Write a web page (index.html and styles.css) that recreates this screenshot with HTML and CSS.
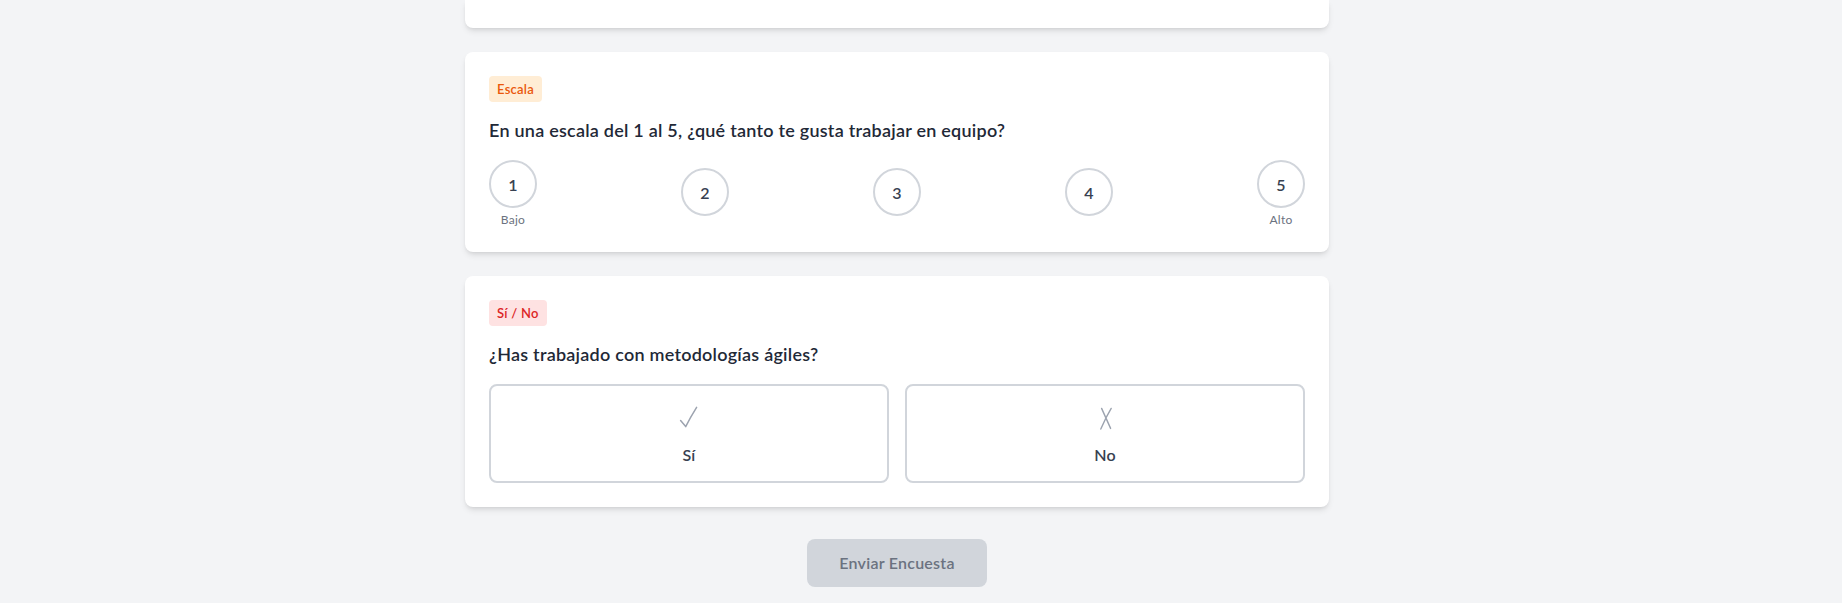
FILE: index.html
```html
<!DOCTYPE html>
<html lang="es">
<head>
<meta charset="utf-8">
<title>Encuesta</title>
<link rel="stylesheet" href="styles.css">
</head>
<body>
<div class="page">
  <div class="survey">
    <div class="card card-stub"></div>

    <div class="card">
      <span class="badge badge-orange">Escala</span>
      <h3 class="question">En una escala del 1 al 5, ¿qué tanto te gusta trabajar en equipo?</h3>
      <div class="scale">
        <div class="scale-item">
          <button class="scale-btn">1</button>
          <span class="scale-label">Bajo</span>
        </div>
        <div class="scale-item">
          <button class="scale-btn">2</button>
        </div>
        <div class="scale-item">
          <button class="scale-btn">3</button>
        </div>
        <div class="scale-item">
          <button class="scale-btn">4</button>
        </div>
        <div class="scale-item">
          <button class="scale-btn">5</button>
          <span class="scale-label">Alto</span>
        </div>
      </div>
    </div>

    <div class="card">
      <span class="badge badge-red">Sí / No</span>
      <h3 class="question">¿Has trabajado con metodologías ágiles?</h3>
      <div class="yesno">
        <button class="yn-btn">
          <span class="yn-icon">
            <svg width="24" height="24" viewBox="0 0 24 24"><path d="M3.6 14.6 L8.7 20.6 Q13 12 19.6 1.4" fill="none" stroke="#9ca3af" stroke-width="1.5" stroke-linecap="round" stroke-linejoin="round"/></svg>
          </span>
          <span class="yn-label">Sí</span>
        </button>
        <button class="yn-btn">
          <span class="yn-icon">
            <svg width="24" height="24" viewBox="0 0 24 24"><path d="M8.6 2.4 L17.6 22.4 M18.2 2.4 Q13 11 7.8 23" fill="none" stroke="#9ca3af" stroke-width="1.4" stroke-linecap="round"/></svg>
          </span>
          <span class="yn-label">No</span>
        </button>
      </div>
    </div>

    <div class="actions">
      <button class="submit" disabled>Enviar Encuesta</button>
    </div>
  </div>
</div>
</body>
</html>
```
FILE: styles.css
```css
* { box-sizing: border-box; }

body {
  margin: 0;
  background: #f3f4f6;
  font-family: Lato, "Noto Sans", sans-serif;
  letter-spacing: 0.015em;
  color: #111827;
}

.page {
  display: flex;
  justify-content: center;
  padding-right: 48px;
}

.survey {
  width: 864px;
  display: flex;
  flex-direction: column;
  gap: 24px;
}

.card {
  background: #ffffff;
  border-radius: 8px;
  box-shadow: 0 4px 6px -1px rgba(0, 0, 0, 0.1), 0 2px 4px -2px rgba(0, 0, 0, 0.1);
  padding: 24px;
  display: flex;
  flex-direction: column;
  align-items: flex-start;
}

.card-stub {
  height: 28px;
  padding: 0;
  border-top-left-radius: 0;
  border-top-right-radius: 0;
}

.badge {
  display: inline-block;
  height: 26px;
  line-height: 18px;
  padding: 4px 8px;
  border-radius: 4px;
  font-size: 13px;
  font-weight: 600;
  margin-bottom: 14px;
}

.badge-orange { background: #ffedd5; color: #ea580c; }
.badge-red { background: #fee2e2; color: #dc2626; }

.question {
  margin: 0 0 16px;
  font-size: 18px;
  line-height: 28px;
  font-weight: 600;
  color: #1f2937;
}

.scale {
  align-self: stretch;
  display: flex;
  justify-content: space-between;
  align-items: center;
  padding-bottom: 4px;
}

.scale-item {
  display: flex;
  flex-direction: column;
  align-items: center;
  gap: 4px;
}

.scale-btn {
  width: 48px;
  height: 48px;
  border-radius: 50%;
  border: 2px solid #d1d5db;
  background: #ffffff;
  font-family: inherit;
  letter-spacing: inherit;
  font-size: 16px;
  font-weight: 600;
  color: #374151;
  padding: 0;
}

.scale-label {
  font-size: 12px;
  line-height: 16px;
  margin-bottom: -4px;
  color: #6b7280;
}

.yesno {
  align-self: stretch;
  display: grid;
  grid-template-columns: 1fr 1fr;
  gap: 16px;
}

.yn-btn {
  display: flex;
  flex-direction: column;
  align-items: center;
  gap: 9px;
  padding: 16px 16px 14px;
  border: 2px solid #d1d5db;
  border-radius: 8px;
  background: #ffffff;
  font-family: inherit;
  letter-spacing: inherit;
}

.yn-icon {
  height: 32px;
  display: flex;
  align-items: center;
  justify-content: center;
}

.yn-icon svg { display: block; }

.yn-label {
  font-size: 16px;
  line-height: 24px;
  font-weight: 600;
  color: #374151;
}

.actions {
  display: flex;
  justify-content: center;
  margin-top: 8px;
}

.submit {
  height: 48px;
  padding: 12px 32px;
  border: none;
  border-radius: 8px;
  background: #d1d5db;
  color: #6b7280;
  font-family: inherit;
  letter-spacing: inherit;
  font-size: 16px;
  line-height: 24px;
  font-weight: 600;
}
```
